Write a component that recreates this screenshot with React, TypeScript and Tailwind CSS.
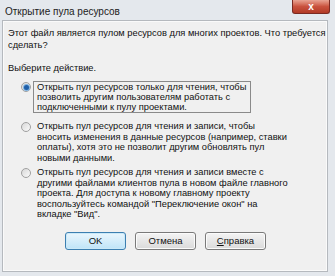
import React from "react";

const font = { fontFamily: '"Liberation Sans", Arial, sans-serif' };

function Radio({ checked }: { checked?: boolean }) {
  return (
    <span className="mt-[1px] flex h-[10px] w-[10px] shrink-0 items-center justify-center rounded-full border border-[#a0a0a0] bg-gradient-to-br from-[#d8d8d8] to-[#fbfbfb]">
      {checked && <span className="h-[5px] w-[5px] rounded-full bg-[#1f5fa8] shadow-[0_0_0_1px_#7fb2e0]" />}
    </span>
  );
}

function Lines({ lines }: { lines: string[] }) {
  return (
    <>
      {lines.map((l, i) => (
        <div key={i} className="whitespace-nowrap">
          {l}
        </div>
      ))}
    </>
  );
}

const btn =
  "h-[18px] w-[61px] rounded-[3px] border text-[9.5px] leading-none text-[#111]";

export default function App() {
  return (
    <div
      className="flex h-[276px] w-[335px] flex-col bg-[#e4e8ed] text-[9.3px] leading-[10.5px] text-[#111]"
      style={font}
    >
      {/* title bar */}
      <div className="flex h-[20px] shrink-0 items-start justify-between">
        <span className="ml-[5px] mt-[6px] text-[10px] leading-[12px] text-[#222]">
          Открытие пула ресурсов
        </span>
        <button className="mr-[5px] flex h-[14px] w-[38px] items-center justify-center rounded-b-[3px] border border-t-0 border-[#7a2a22] bg-gradient-to-b from-[#e8a393] via-[#c9523e] to-[#b23a26] text-[10px] font-bold leading-none text-white">
          x
        </button>
      </div>

      {/* dialog body */}
      <div className="ml-[2px] mr-[7px] flex h-[252px] flex-col border border-[#b5b9be] bg-[#f0f0f0] shadow-[inset_0_0_0_1px_#fafafa]">
        <div className="ml-[5px] mt-[6px] leading-[12px]">
          <Lines lines={["Этот файл является пулом ресурсов для многих проектов. Что требуется", "сделать?"]} />
        </div>
        <div className="ml-[5px] mt-[11px] leading-[12px]">Выберите действие.</div>

        <div className="ml-[18px] mt-[7px] flex flex-col">
          <div className="flex items-start gap-[2px]">
            <Radio checked />
            <div className="w-[218px] border border-[#8a8a8a] px-[3px] leading-[10px]">
              <Lines
                lines={[
                  "Открыть пул ресурсов только для чтения, чтобы",
                  "позволить другим пользователям работать с",
                  "подключенными к пулу проектами.",
                ]}
              />
            </div>
          </div>
          <div className="mt-[8px] flex items-start gap-[3px]">
            <Radio />
            <div className="px-[3px]">
              <Lines
                lines={[
                  "Открыть пул ресурсов для чтения и записи, чтобы",
                  "вносить изменения в данные ресурсов (например, ставки",
                  "оплаты), хотя это не позволит другим обновлять пул",
                  "новыми данными.",
                ]}
              />
            </div>
          </div>
          <div className="mt-[4px] flex items-start gap-[3px]">
            <Radio />
            <div className="px-[3px]">
              <Lines
                lines={[
                  "Открыть пул ресурсов для чтения и записи вместе с",
                  "другими файлами клиентов пула в новом файле главного",
                  "проекта. Для доступа к новому главному проекту",
                  "воспользуйтесь командой \"Переключение окон\" на",
                  "вкладке \"Вид\".",
                ]}
              />
            </div>
          </div>
        </div>

        <div className="ml-[62px] mt-auto mb-[21px] flex gap-[9px]">
          <button className={`${btn} border-[#3c7fb1] bg-gradient-to-b from-[#eaf6fd] to-[#bfe4f8] shadow-[inset_0_0_0_1px_#cbe9f8]`}>
            OK
          </button>
          <button className={`${btn} border-[#7a7a7a] bg-gradient-to-b from-[#f4f4f4] to-[#dadada] shadow-[inset_0_0_0_1px_#fbfbfb]`}>
            Отмена
          </button>
          <button className={`${btn} border-[#7a7a7a] bg-gradient-to-b from-[#f4f4f4] to-[#dadada] shadow-[inset_0_0_0_1px_#fbfbfb]`}>
            <span className="underline">С</span>правка
          </button>
        </div>
      </div>
    </div>
  );
}
